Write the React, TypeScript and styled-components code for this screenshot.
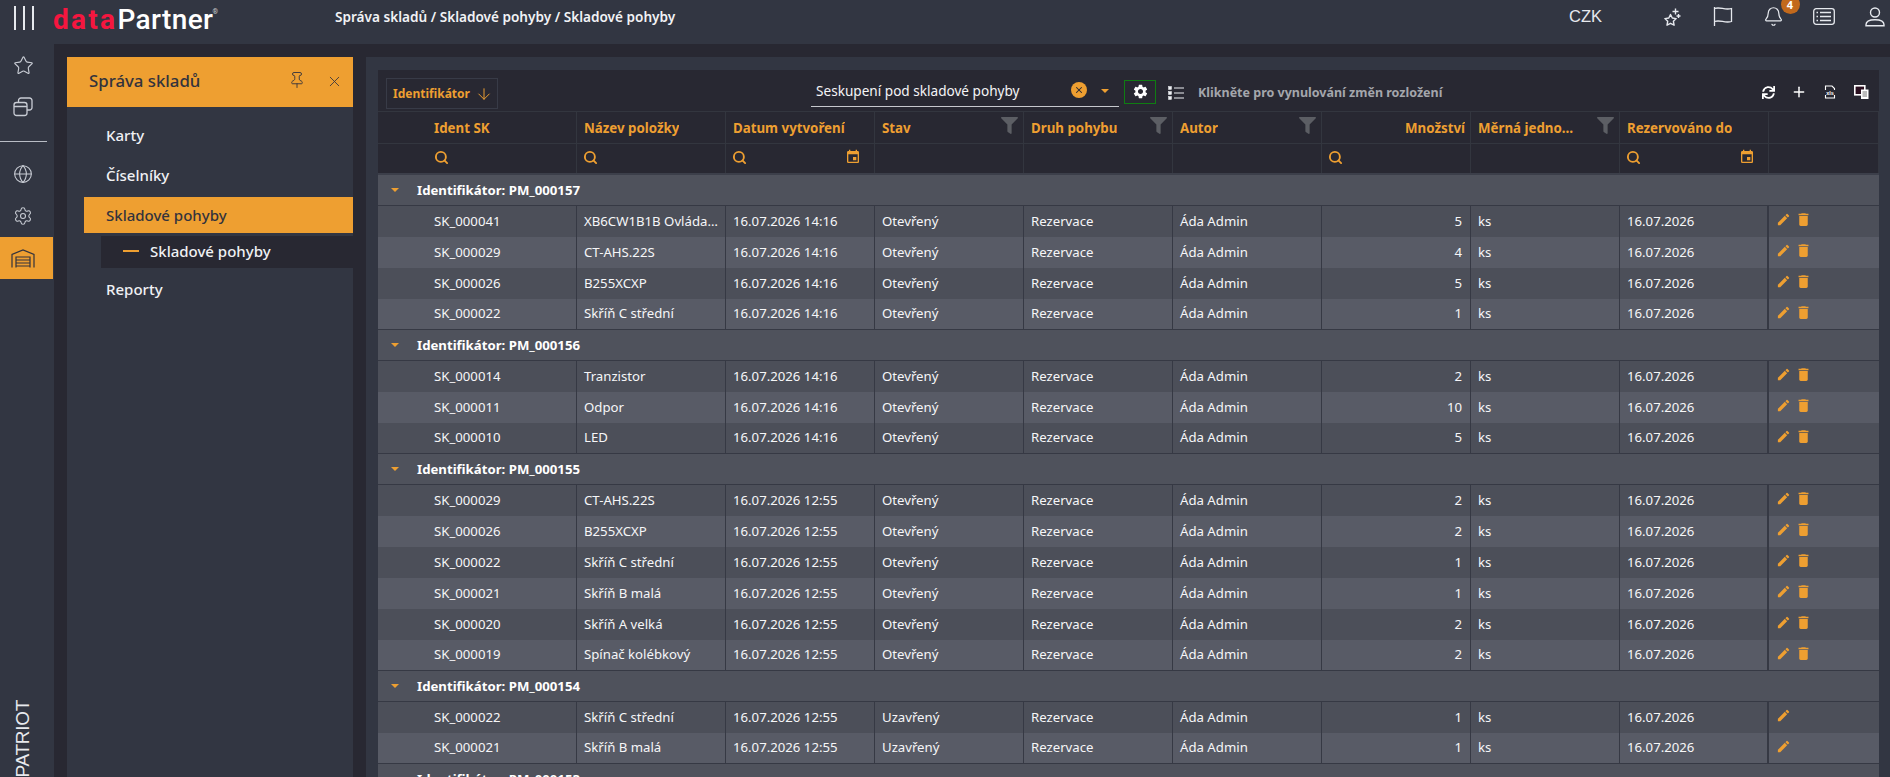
import React from "react";
import styled, { createGlobalStyle } from "styled-components";
import { ArrowDown, Bell, Globe, Pin, Plus, Search, Settings, Star, X } from "lucide-react";
import { FaFilter, FaSync } from "react-icons/fa";
import { MdDelete, MdEdit, MdEvent, MdSettings } from "react-icons/md";

const orange = "#ee9f31";
const dark = "#282832";
const panel = "#323642";
const font = `"Noto Sans", "Open Sans", sans-serif`;

const GlobalStyle = createGlobalStyle`
  html, body { margin: 0; padding: 0; height: 100%; overflow: hidden; background: ${dark}; }
  * { box-sizing: border-box; }
`;

const Page = styled.div`
  height: 777px;
  display: flex;
  flex-direction: column;
  overflow: hidden;
  font-family: ${font};
  color: #fff;
`;

const TopBar = styled.header`
  height: 44px;
  flex: none;
  background: ${panel};
  display: flex;
  align-items: center;
  overflow: hidden;
`;

const Burger = styled.div`
  width: 53px;
  padding-left: 14px;
  display: flex;
  gap: 7px;
  height: 24px;
  margin-top: -9px;
  span {
    width: 2px;
    background: #e6e9ee;
  }
`;

const Logo = styled.div`
  width: 282px;
  font-family: "Roboto", sans-serif;
  font-size: 28px;
  font-weight: 500;
  letter-spacing: 0.400px;
  margin-top: -6px;
  white-space: nowrap;
  b { color: #f5163f; font-weight: 700; letter-spacing: 2.300px; }
  sup { font-size: 7px; vertical-align: 15px; line-height: 0; color: #ccc; margin-left: -1px; }
`;

const Crumbs = styled.div`
  font-size: 13.600px;
  font-weight: 600;
  color: #f1f2f5;
  margin-top: -12px;
  white-space: nowrap;
`;

const TopRight = styled.div`
  margin-left: auto;
  margin-right: -10px;
  display: flex;
  align-items: center;
  margin-top: -11px;
  color: #e6e9ee;
`;

const Currency = styled.div`
  font-size: 16.500px;
  font-family: "Liberation Sans", sans-serif;
  width: 60px;
  margin-right: 32px;
  text-align: center;
`;

const TopIcon = styled.div`
  width: 50.500px;
  height: 22px;
  display: flex;
  justify-content: center;
  align-items: center;
  position: relative;
`;

const Badge = styled.span`
  position: absolute;
  left: 32px;
  top: -11px;
  width: 19px;
  height: 19px;
  border-radius: 50%;
  background: #c2691c;
  color: #fff;
  font-size: 11px;
  font-weight: 700;
  text-align: center;
  line-height: 19px;
`;

const Body = styled.div`
  flex: 1;
  display: flex;
  min-height: 0;
`;

const Rail = styled.nav`
  width: 54px;
  flex: none;
  background: ${panel};
  display: flex;
  flex-direction: column;
  color: #c8ccd4;
`;

const RailIcon = styled.div<{ $active?: boolean }>`
  height: 42px;
  width: 53px;
  flex: none;
  display: flex;
  align-items: center;
  justify-content: center;
  padding-right: 7px;
  background: ${(p) => (p.$active ? orange : "transparent")};
  color: ${(p) => (p.$active ? "#33333d" : "inherit")};
`;

const RailLine = styled.div`
  height: 1px;
  width: 47px;
  background: #b9bdc5;
  margin: 13px 0 11px;
`;

const Patriot = styled.div`
  margin-top: auto;
  writing-mode: vertical-rl;
  transform: rotate(180deg);
  font-family: "Liberation Sans", sans-serif;
  font-size: 19px;
  line-height: 24px;
  letter-spacing: -0.300px;
  color: #e8e9ed;
  align-self: flex-start;
  margin-left: 11px;
`;

const Main = styled.main`
  flex: 1;
  min-width: 0;
  background: ${dark};
  padding: 13px 0 0 13px;
  display: flex;
  gap: 13px;
`;

const Sidebar = styled.aside`
  width: 286px;
  flex: none;
  background: ${panel};
`;

const SideHead = styled.div`
  height: 50px;
  background: ${orange};
  color: #33333d;
  display: flex;
  align-items: center;
  padding: 0 10px 4px 22px;
  font-size: 16.800px;
  font-weight: 500;
  svg { flex: none; }
`;

const SideTitle = styled.div`
  flex: 1;
`;

const PinIcon = styled(Pin)`
  margin-right: 20px;
`;

const CloseIcon = styled(X)`
  margin-top: 2px;
`;

const Menu = styled.div`
  padding: 10px 0 0 17px;
  display: flex;
  flex-direction: column;
  gap: 4px;
`;

const MenuItem = styled.div<{ $active?: boolean }>`
  height: 36px;
  line-height: 36px;
  padding-left: 22px;
  font-size: 15px;
  font-weight: 500;
  color: ${(p) => (p.$active ? "#33333d" : "#f0f1f4")};
  background: ${(p) => (p.$active ? orange : "transparent")};
`;

const SubItem = styled.div`
  height: 32px;
  margin: -1px 0 -1px 17px;
  background: ${dark};
  display: flex;
  align-items: center;
  padding: 0 0 2px 22px;
  gap: 11px;
  font-size: 15px;
  font-weight: 500;
  color: #f0f1f4;
  i {
    width: 16px;
    height: 2px;
    background: ${orange};
  }
`;

const Content = styled.section`
  flex: 1;
  min-width: 0;
  background: ${panel};
  padding: 13px 11px 0 12px;
  overflow: hidden;
`;

const Toolbar = styled.div`
  height: 41px;
  background: ${dark};
  display: flex;
  align-items: center;
  padding: 0 8px;
`;

const GroupChip = styled.div`
  width: 112px;
  height: 31px;
  margin-top: 6px;
  border: 1px solid #383b47;
  display: flex;
  align-items: center;
  padding-left: 6px;
  gap: 5px;
  font-size: 12px;
  font-weight: 700;
  color: ${orange};
`;

const GroupSelect = styled.div`
  width: 308px;
  height: 28px;
  margin: 4px 0 0 313px;
  border-bottom: 1px solid #c6c8cd;
  display: flex;
  align-items: center;
  padding: 0 10px 3px 5px;
  font-size: 13.600px;
  color: #f4f4f6;
`;

const SelectValue = styled.div`
  flex: 1;
`;

const ClearDot = styled.div`
  width: 16px;
  height: 16px;
  margin-top: -2px;
  border-radius: 50%;
  background: ${orange};
  color: ${dark};
  display: flex;
  align-items: center;
  justify-content: center;
  margin-right: 14px;
`;

const Caret = styled.span`
  display: inline-block;
  width: 0;
  height: 0;
  border-left: 4px solid transparent;
  border-right: 4px solid transparent;
  border-top: 4px solid ${orange};
`;

const GearButton = styled.div`
  width: 32px;
  height: 24px;
  margin: 2px 0 0 5px;
  border: 1px solid #0f7d12;
  display: flex;
  align-items: center;
  justify-content: center;
  color: #fff;
`;

const LayoutIcon = styled.div`
  margin: 4px 0 0 12px;
  display: flex;
  color: #eef0f4;
`;

const ResetText = styled.div`
  margin: 4px 0 0 14px;
  font-size: 12.500px;
  font-weight: 700;
  color: #a4a6ac;
  white-space: nowrap;
`;

const ToolIcons = styled.div`
  margin: 3px 0 0 auto;
  display: flex;
  align-items: center;
  gap: 15px;
  color: #fff;
  padding-right: 2px;
`;

const ToolIcon = styled.div`
  width: 16px;
  display: flex;
  justify-content: center;
`;

const Grid = styled.table`
  width: 1501px;
  table-layout: fixed;
  border-collapse: separate;
  border-spacing: 0;
  font-size: 13.200px;
`;

const HeadCell = styled.th<{ $pad?: number }>`
  height: 32px;
  background: ${dark};
  border-top: 1px solid #33363f;
  border-right: 1px solid #33363f;
  padding: 0 0 0 ${(p) => p.$pad ?? 7}px;
  font-size: 13.300px;
  font-weight: 700;
  color: ${orange};
  text-align: left;
`;

const HeadInner = styled.div<{ $right?: boolean }>`
  display: flex;
  align-items: center;
  justify-content: ${(p) => (p.$right ? "flex-end" : "space-between")};
  padding-right: 5px;
  min-width: 0;
  span {
    overflow: hidden;
    text-overflow: ellipsis;
    white-space: nowrap;
  }
  svg {
    flex: none;
    color: #5c5e64;
    margin: -5px 0 0 20px;
  }
`;

const FilterCell = styled.td<{ $pad?: number }>`
  height: 30px;
  background: ${dark};
  border-top: 1px solid #33363f;
  border-right: 1px solid #33363f;
  padding: 0 13px 3px ${(p) => p.$pad ?? 6}px;
  color: ${orange};
`;

const FilterInner = styled.div`
  display: flex;
  align-items: center;
  justify-content: space-between;
`;

const SpacerCell = styled.td`
  height: 2px;
  padding: 0;
  background: #3c3f4a;
`;

const GroupCell = styled.td`
  height: 31px;
  padding: 0 0 0 13px;
  background: #4f525c;
  border-bottom: 1px solid #363944;
  font-weight: 700;
  color: #fff;
`;

const GroupInner = styled.div`
  display: flex;
  align-items: center;
  gap: 18px;
`;

const DataCell = styled.td<{ $odd: boolean; $last: boolean; $pad?: number; $right?: boolean; $wide?: boolean }>`
  height: 31px;
  padding: 0 ${(p) => (p.$right ? 8 : 4)}px 2px ${(p) => p.$pad ?? 7}px;
  background: ${(p) => (p.$odd ? "#585b66" : "#4c4f59")};
  border-right: ${(p) => (p.$wide ? 2 : 1)}px solid #363944;
  border-bottom: ${(p) => (p.$last ? "1px solid #363944" : "0")};
  color: #f6f6f8;
  text-align: ${(p) => (p.$right ? "right" : "left")};
  overflow: hidden;
  text-overflow: ellipsis;
  white-space: nowrap;
`;

const ActionCell = styled(DataCell)`
  border-right: 0;
  color: ${orange};
`;

const Actions = styled.div`
  display: flex;
  align-items: center;
  gap: 4px;
  margin-top: -2px;
`;

const widths = [199, 149, 149, 149, 149, 149, 149, 149, 149, 110];

const columns = [
  { title: "Ident SK", pad: 56, search: true },
  { title: "Název položky", search: true },
  { title: "Datum vytvoření", search: true, date: true },
  { title: "Stav", filter: true },
  { title: "Druh pohybu", filter: true },
  { title: "Autor", filter: true },
  { title: "Množství", right: true, search: true },
  { title: "Měrná jednotka", filter: true },
  { title: "Rezervováno do", search: true, date: true },
  { title: "" },
];

type Row = [string, string, string];

const groups: { id: string; time: string; state: string; canDelete: boolean; rows: Row[] }[] = [
  {
    id: "PM_000157",
    time: "14:16",
    state: "Otevřený",
    canDelete: true,
    rows: [
      ["SK_000041", "XB6CW1B1B Ovládací prvek", "5"],
      ["SK_000029", "CT-AHS.22S", "4"],
      ["SK_000026", "B255XCXP", "5"],
      ["SK_000022", "Skříň C střední", "1"],
    ],
  },
  {
    id: "PM_000156",
    time: "14:16",
    state: "Otevřený",
    canDelete: true,
    rows: [
      ["SK_000014", "Tranzistor", "2"],
      ["SK_000011", "Odpor", "10"],
      ["SK_000010", "LED", "5"],
    ],
  },
  {
    id: "PM_000155",
    time: "12:55",
    state: "Otevřený",
    canDelete: true,
    rows: [
      ["SK_000029", "CT-AHS.22S", "2"],
      ["SK_000026", "B255XCXP", "2"],
      ["SK_000022", "Skříň C střední", "1"],
      ["SK_000021", "Skříň B malá", "1"],
      ["SK_000020", "Skříň A velká", "2"],
      ["SK_000019", "Spínač kolébkový", "2"],
    ],
  },
  {
    id: "PM_000154",
    time: "12:55",
    state: "Uzavřený",
    canDelete: false,
    rows: [
      ["SK_000022", "Skříň C střední", "1"],
      ["SK_000021", "Skříň B malá", "1"],
    ],
  },
  { id: "PM_000153", time: "12:55", state: "Uzavřený", canDelete: false, rows: [] },
];

const WindowsIcon = () => (
  <svg width="20" height="20" viewBox="0 0 20 20" fill="none" stroke="currentColor" strokeWidth="1.300">
    <rect x="1" y="5.500" width="13" height="13" rx="2.500" />
    <path d="M1 9.500h13M5.500 5.500V3.500a2.500 2.500 0 0 1 2.500-2.500h8.500a2.500 2.500 0 0 1 2.500 2.500v7a2.500 2.500 0 0 1-2.500 2.500H14" />
  </svg>
);

const WarehouseIcon = () => (
  <svg width="24" height="19" viewBox="0 0 24 19" fill="none" stroke="currentColor" strokeWidth="1.200">
    <path d="M1 18.500V5.500L12 1l11 4.500v13" />
    <path d="M5 18.500V8h14v10.500M5 11h14M5 14h14M5 17h14" />
  </svg>
);

const StarPlusIcon = () => (
  <svg width="20" height="20" viewBox="0 0 20 20" fill="none" stroke="currentColor" strokeWidth="1.400" strokeLinejoin="round">
    <path d="M7.500 7.500 9.300 11l3.900.600-2.800 2.700.700 3.900-3.600-1.900-3.500 1.900.700-3.900L1.900 11.600l3.900-.600z" />
    <path d="M12.500 1.500v6M9.500 4.500h6M15.500 7v4M13.500 9h4" />
  </svg>
);

const FlagIcon = () => (
  <svg width="20" height="21" viewBox="0 0 20 21" fill="none" stroke="currentColor" strokeWidth="1.300">
    <path d="M1.500 1v19" />
    <path d="M1.500 2.500c6-2 10 2 17 0v13c-7 2-11-2-17 0" />
  </svg>
);

const UserIcon = () => (
  <svg width="22" height="20" viewBox="0 0 22 20" fill="none" stroke="currentColor" strokeWidth="1.400">
    <circle cx="11" cy="5.500" r="4.500" />
    <path d="M2 18.800v-1c0-3 3-5 9-5s9 2 9 5v1z" />
  </svg>
);

const ListBoxIcon = () => (
  <svg width="22" height="17" viewBox="0 0 22 17" fill="none" stroke="currentColor" strokeWidth="1.300">
    <rect x="0.700" y="0.700" width="20.600" height="15.600" rx="2.500" />
    <path d="M7 4.500h11M7 8.500h11M7 12.500h11M3.500 4.500h1.500M3.500 8.500h1.500M3.500 12.500h1.500" strokeWidth="1.700" />
  </svg>
);

const BulletListIcon = () => (
  <svg width="16" height="14" viewBox="0 0 16 14" fill="none" stroke="currentColor">
    <path d="M6 2h10M6 7h10M6 12h10" strokeWidth="1.200" />
    <rect x="0.500" y="0.500" width="3" height="3" fill="currentColor" strokeWidth="0.500" />
    <rect x="0.500" y="5.500" width="3" height="3" fill="currentColor" strokeWidth="0.500" />
    <rect x="0.500" y="10.500" width="3" height="3" fill="currentColor" strokeWidth="0.500" />
  </svg>
);

const XlsIcon = () => (
  <svg width="14" height="14" viewBox="0 0 14 14" fill="none" stroke="currentColor" strokeWidth="1.100">
    <path d="M2.500 5V1h6.500l2.500 2.500V5M2.500 10v3h9v-3" />
    <text x="7" y="9.500" fontSize="5.500" fontWeight="700" textAnchor="middle" fill="currentColor" stroke="none" fontFamily="Liberation Sans, sans-serif">xls</text>
  </svg>
);

const CopyIcon = () => (
  <svg width="15" height="14" viewBox="0 0 15 14">
    <rect x="0.800" y="0.800" width="10" height="9" fill="#2b1020" stroke="#fff" strokeWidth="1.600" />
    <rect x="7" y="4.500" width="7.500" height="9.500" fill="#fff" />
    <path d="M8.500 7h4.500M8.500 9h4.500M8.500 11h4.500" stroke="#555" strokeWidth="0.800" />
  </svg>
);

const App = () => (
  <Page>
    <GlobalStyle />
    <TopBar>
      <Burger>
        <span />
        <span />
        <span />
      </Burger>
      <Logo>
        <b>data</b>Partner<sup>®</sup>
      </Logo>
      <Crumbs>Správa skladů / Skladové pohyby / Skladové pohyby</Crumbs>
      <TopRight>
        <Currency>CZK</Currency>
        <TopIcon>
          <StarPlusIcon />
        </TopIcon>
        <TopIcon>
          <FlagIcon />
        </TopIcon>
        <TopIcon>
          <Bell size={21} strokeWidth={1.4} />
          <Badge>4</Badge>
        </TopIcon>
        <TopIcon>
          <ListBoxIcon />
        </TopIcon>
        <TopIcon>
          <UserIcon />
        </TopIcon>
      </TopRight>
    </TopBar>
    <Body>
      <Rail>
        <RailIcon>
          <Star size={21} strokeWidth={1.3} />
        </RailIcon>
        <RailIcon>
          <WindowsIcon />
        </RailIcon>
        <RailLine />
        <RailIcon>
          <Globe size={20} strokeWidth={1.3} />
        </RailIcon>
        <RailIcon>
          <Settings size={20} strokeWidth={1.3} />
        </RailIcon>
        <RailIcon $active>
          <WarehouseIcon />
        </RailIcon>
        <Patriot>PATRIOT</Patriot>
      </Rail>
      <Main>
        <Sidebar>
          <SideHead>
            <SideTitle>Správa skladů</SideTitle>
            <PinIcon size={18} strokeWidth={1.2} />
            <CloseIcon size={17} strokeWidth={1.2} />
          </SideHead>
          <Menu>
            <MenuItem>Karty</MenuItem>
            <MenuItem>Číselníky</MenuItem>
            <MenuItem $active>Skladové pohyby</MenuItem>
            <SubItem>
              <i />
              Skladové pohyby
            </SubItem>
            <MenuItem>Reporty</MenuItem>
          </Menu>
        </Sidebar>
        <Content>
          <Toolbar>
            <GroupChip>
              Identifikátor
              <ArrowDown size={18} strokeWidth={1.3} />
            </GroupChip>
            <GroupSelect>
              <SelectValue>Seskupení pod skladové pohyby</SelectValue>
              <ClearDot>
                <X size={10} strokeWidth={2.5} />
              </ClearDot>
              <Caret />
            </GroupSelect>
            <GearButton>
              <MdSettings size={17} />
            </GearButton>
            <LayoutIcon>
              <BulletListIcon />
            </LayoutIcon>
            <ResetText>Klikněte pro vynulování změn rozložení</ResetText>
            <ToolIcons>
              <ToolIcon>
                <FaSync size={13} />
              </ToolIcon>
              <ToolIcon>
                <Plus size={16} strokeWidth={2.2} />
              </ToolIcon>
              <ToolIcon>
                <XlsIcon />
              </ToolIcon>
              <ToolIcon>
                <CopyIcon />
              </ToolIcon>
            </ToolIcons>
          </Toolbar>
          <Grid>
            <colgroup>
              {widths.map((w, i) => (
                <col key={i} width={w} />
              ))}
            </colgroup>
            <thead>
              <tr>
                {columns.map((c) => (
                  <HeadCell key={c.title} $pad={c.pad}>
                    <HeadInner $right={c.right}>
                      <span>{c.title}</span>
                      {c.filter && <FaFilter size={17} />}
                    </HeadInner>
                  </HeadCell>
                ))}
              </tr>
              <tr>
                {columns.map((c) => (
                  <FilterCell key={c.title} $pad={c.pad}>
                    <FilterInner>
                      {c.search && <Search size={15} strokeWidth={3} />}
                      {c.date && <MdEvent size={16} />}
                    </FilterInner>
                  </FilterCell>
                ))}
              </tr>
              <tr>
                <SpacerCell colSpan={10} />
              </tr>
            </thead>
            <tbody>
              {groups.map((g) => (
                <React.Fragment key={g.id}>
                  <tr>
                    <GroupCell colSpan={10}>
                      <GroupInner>
                        <Caret />
                        Identifikátor: {g.id}
                      </GroupInner>
                    </GroupCell>
                  </tr>
                  {g.rows.map((r, i) => {
                    const cell = { $odd: i % 2 === 1, $last: i === g.rows.length - 1 };
                    return (
                      <tr key={r[0]}>
                        <DataCell {...cell} $pad={56}>{r[0]}</DataCell>
                        <DataCell {...cell}>{r[1]}</DataCell>
                        <DataCell {...cell}>16.07.2026 {g.time}</DataCell>
                        <DataCell {...cell}>{g.state}</DataCell>
                        <DataCell {...cell}>Rezervace</DataCell>
                        <DataCell {...cell}>Áda Admin</DataCell>
                        <DataCell {...cell} $right>{r[2]}</DataCell>
                        <DataCell {...cell}>ks</DataCell>
                        <DataCell {...cell} $wide>16.07.2026</DataCell>
                        <ActionCell {...cell}>
                          <Actions>
                            <MdEdit size={15} />
                            {g.canDelete && <MdDelete size={17} />}
                          </Actions>
                        </ActionCell>
                      </tr>
                    );
                  })}
                </React.Fragment>
              ))}
            </tbody>
          </Grid>
        </Content>
      </Main>
    </Body>
  </Page>
);

export default App;
